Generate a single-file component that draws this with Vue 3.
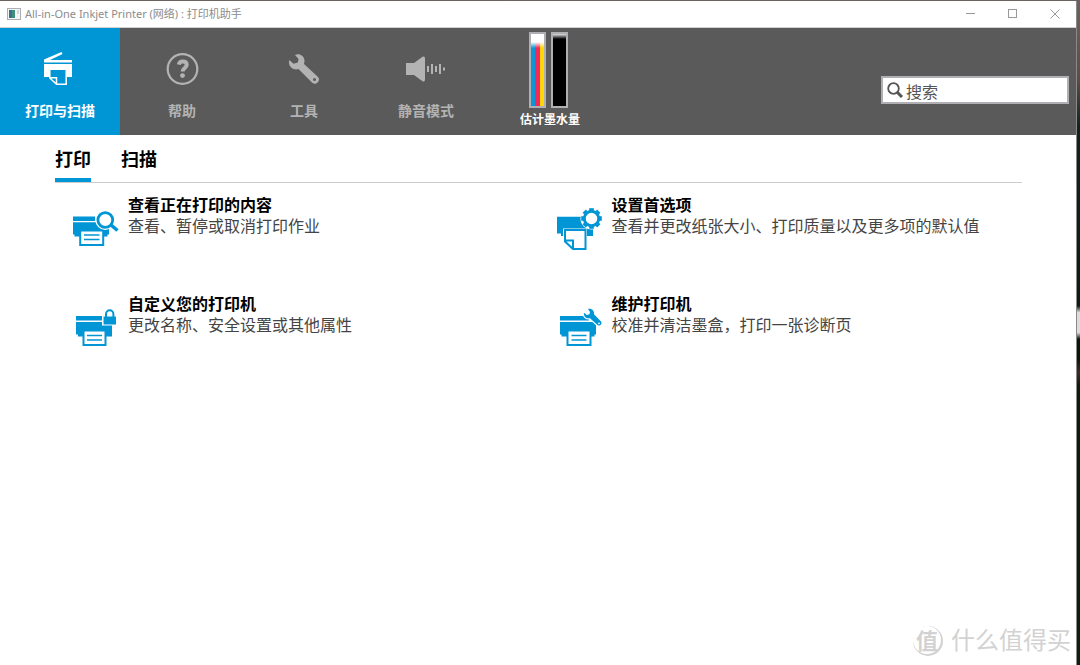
<script setup>
import { ref } from 'vue'

const section = ref('scan')
const tab = ref('print')
const query = ref('')

const sections = [
  { id: 'scan', label: '打印与扫描' },
  { id: 'help', label: '帮助' },
  { id: 'tools', label: '工具' },
  { id: 'quiet', label: '静音模式' }
]
const tabs = [
  { id: 'print', label: '打印' },
  { id: 'scan', label: '扫描' }
]
const tasks = [
  { id: 'queue', title: '查看正在打印的内容', text: '查看、暂停或取消打印作业' },
  { id: 'prefs', title: '设置首选项', text: '查看并更改纸张大小、打印质量以及更多项的默认值' },
  { id: 'custom', title: '自定义您的打印机', text: '更改名称、安全设置或其他属性' },
  { id: 'maintain', title: '维护打印机', text: '校准并清洁墨盒，打印一张诊断页' }
]
const teeth = [0, 45, 90, 135, 180, 225, 270, 315]
</script>

<template>
  <div class="desktop">
    <div class="window">
      <header class="titlebar">
        <svg class="app-icon" viewBox="0 0 14 12" aria-hidden="true">
          <rect x="0.5" y="0.5" width="13" height="11" fill="#f4f6f6" stroke="#a9b0b3" />
          <rect x="2" y="2" width="6" height="8" fill="#3f8f7c" />
          <rect x="2" y="2" width="3" height="8" fill="#3b6f8f" />
          <path d="M10 3h2M10 5h2" stroke="#b5b5b5" />
        </svg>
        <h1>All-in-One Inkjet Printer (网络) : 打印机助手</h1>
        <div class="controls">
          <button type="button" aria-label="最小化"><svg viewBox="0 0 10 10"><path d="M0 4.5h9" /></svg></button>
          <button type="button" aria-label="最大化"><svg viewBox="0 0 10 10"><rect x="0.5" y="0.5" width="8" height="8" /></svg></button>
          <button type="button" aria-label="关闭"><svg viewBox="0 0 10 10"><path d="M0.5 0.5l9 9M9.5 0.5l-9 9" /></svg></button>
        </div>
      </header>

      <div class="toolbar">
        <nav class="sections">
          <button
            v-for="s in sections"
            :key="s.id"
            type="button"
            class="section"
            :class="{ active: section === s.id }"
            @click="section = s.id"
          >
            <svg viewBox="0 0 40 40" aria-hidden="true">
              <g v-if="s.id === 'scan'">
                <path d="M4 10.500L21.500 3l1 2L10 11h22v2.500H4z" fill="#fff" />
                <path d="M4 15h28v13h-5v-7H10v7H4z" fill="#fff" />
                <path d="M10.500 21.500h15V35H16.500L10.500 29z" fill="#0096d6" />
                <path d="M26.200 20v15.200H16.500L9.800 29V20M10 28.800h6.500V35" fill="none" stroke="#fff" stroke-width="1.500" />
              </g>
              <g v-else-if="s.id === 'help'">
                <circle cx="20.500" cy="20" r="14.800" fill="none" stroke="#b3b3b3" stroke-width="2.200" />
                <path d="M16.800 15.600c.4-2.300 1.800-3.100 3.900-3.100 2.400 0 4 1.200 4 3.200 0 3.300-4 3.200-4 6.800" fill="none" stroke="#b3b3b3" stroke-width="4" />
                <circle cx="20.500" cy="26.600" r="2.400" fill="#b3b3b3" />
              </g>
              <g v-else-if="s.id === 'tools'">
                <path d="M11 6c4-2 9 .5 9.500 5.500 0 1.500-.3 2.500-.5 3.500L33.500 27.500a4 4 0 0 1-5.500 6L14.500 20c-4 1.500-9-1-9.500-6-.1-1.200 0-2 .3-3l4.200 3.800 4.300-1.300.8-3.500z" fill="#b3b3b3" />
                <circle cx="30.500" cy="30.500" r="1.500" fill="#5a5a5a" />
              </g>
              <g v-else>
                <path d="M0 14h8l8.500-6.200Q19 6.500 19 9.500v21Q19 33.500 16.500 32.200L8 26H0z" fill="#b3b3b3" />
                <path d="M22 17v6M26 15v10M30 17v6M34 15v10M38 18.500v3" fill="none" stroke="#b3b3b3" stroke-width="2" />
              </g>
            </svg>
            <span>{{ s.label }}</span>
          </button>
          <button type="button" class="ink">
            <span class="tanks">
              <span class="tank color"></span>
              <span class="tank black"></span>
            </span>
            <span>估计墨水量</span>
          </button>
        </nav>
        <label class="search">
          <svg viewBox="0 0 16 16" aria-hidden="true">
            <circle cx="6.500" cy="6.500" r="5.300" fill="none" stroke="#555" stroke-width="1.800" />
            <path d="M10 10l5 5" stroke="#555" stroke-width="3" />
          </svg>
          <input v-model="query" type="text" placeholder="搜索" aria-label="搜索" />
        </label>
      </div>

      <main>
        <div class="tabs">
          <button
            v-for="t in tabs"
            :key="t.id"
            type="button"
            :class="{ current: tab === t.id }"
            @click="tab = t.id"
          >{{ t.label }}</button>
        </div>
        <div class="tasks">
          <a v-for="t in tasks" :key="t.id" class="task" href="#">
            <svg viewBox="0 0 48 48" fill="#0096d6" aria-hidden="true">
              <g v-if="t.id === 'queue'">
                <path d="M1 12.500h22v4.500H1zM1 18.300h36V30.500h-1.500V32.500H2.500V30.500H1z" />
                <path d="M8.200 26.500h23V41h-23z" fill="#fff" stroke="#0096d6" stroke-width="2" />
                <path d="M12 31h15.500M12 35.500h15.500" stroke="#0096d6" stroke-width="1.700" />
                <circle cx="33.300" cy="16" r="10" fill="#fff" />
                <path d="M37 20l6 5" stroke="#fff" stroke-width="6" />
                <circle cx="33.300" cy="16" r="7.400" fill="#fff" stroke="#0096d6" stroke-width="2.800" />
                <path d="M38.500 20.500l7 6" stroke="#0096d6" stroke-width="3.600" />
              </g>
              <g v-else-if="t.id === 'prefs'">
                <path d="M1 12.700h36V32H5V29.500H1z" />
                <path d="M7 24.500h24v9H7z" fill="#fff" />
                <path d="M9 26h20.500V45H17L9 37.500zM9 36.500h8V45" fill="#fff" stroke="#0096d6" stroke-width="2" />
                <circle cx="35.500" cy="14.500" r="11" fill="#fff" />
                <rect v-for="a in teeth" :key="a" x="33.200" y="4.200" width="4.600" height="5" :transform="`rotate(${a} 35.500 14.500)`" />
                <circle cx="35.500" cy="14.500" r="7.200" fill="#fff" stroke="#0096d6" stroke-width="2.900" />
              </g>
              <g v-else-if="t.id === 'custom'">
                <path d="M4 13h26v4.500H4zM4 19h36v14.500H6V31.500H4z" />
                <path d="M11.500 27.500h22V42h-22z" fill="#fff" stroke="#0096d6" stroke-width="2" />
                <path d="M15 32.500h15M15 37h15" stroke="#0096d6" stroke-width="1.700" />
                <path d="M30 12.500H46V22.500H30z" fill="#fff" />
                <path d="M31.500 13.500H44V21.500H31.500z" />
                <path d="M34 14v-3a3.700 3.700 0 0 1 7.400 0v3" fill="none" stroke="#0096d6" stroke-width="2" />
              </g>
              <g v-else>
                <path d="M4 13h29v4.500H4zM4 19h36v12.500h-1.500v2H5.500v-2H4z" />
                <path d="M11.500 27.500h23V42h-23z" fill="#fff" stroke="#0096d6" stroke-width="2" />
                <path d="M15.500 32.500h15M15.500 37h15" stroke="#0096d6" stroke-width="1.700" />
                <path
                  d="M32 6c3-1 6.600 1.300 6 5.200L45 18.500c1.800 2-1.200 5.200-3.500 3.600L34 15.200c-3.500.8-6.600-1.500-6-5.400l2.800 2.200 2.700-.7.500-2.200z"
                  stroke="#fff" stroke-width="2.400" paint-order="stroke"
                />
                <circle cx="43" cy="20.300" r="0.900" fill="#fff" />
              </g>
            </svg>
            <span class="copy">
              <strong>{{ t.title }}</strong>
              <span>{{ t.text }}</span>
            </span>
          </a>
        </div>
      </main>
      <div class="watermark"><span class="seal">值</span><span>什么值得买</span></div>
    </div>
  </div>
</template>

<style>
body {
  margin: 0;
}
</style>

<style scoped>
.desktop {
  box-sizing: border-box;
  min-height: 100vh;
  display: flex;
  padding: 1px 3px 0 0;
  background: linear-gradient(#6b6360 0, #5b4c48 12%, #14211f 19%, #101a12 46%, #ddd 47%, #ddd 50%, #0c140c 51%, #0c140c 54%, #3a2c28 56%, #10180f 58%, #131a12 100%);
  font-family: "Noto Sans", "Noto Sans CJK SC", sans-serif;
}
.window {
  flex: 1;
  display: flex;
  flex-direction: column;
  position: relative;
  background: #fff;
  border-right: 1px solid #8a8a8a;
}
button {
  border: 0;
  padding: 0;
  background: none;
  font: inherit;
  color: inherit;
}
.titlebar {
  display: flex;
  align-items: center;
  box-sizing: border-box;
  height: 27px;
  padding-left: 7px;
  border-bottom: 1px solid #d0d0d0;
}
.app-icon {
  width: 14px;
  height: 12px;
  margin-right: 4px;
}
h1 {
  margin: 0;
  flex: 1;
  font-size: 11px;
  line-height: 16px;
  font-weight: 400;
  color: #8c8c8c;
}
.controls {
  display: flex;
}
.controls button {
  width: 42px;
  height: 26px;
  display: flex;
  align-items: center;
  justify-content: center;
}
.controls svg {
  width: 10px;
  height: 10px;
  fill: none;
  stroke: #999;
}
.toolbar {
  display: flex;
  justify-content: space-between;
  height: 107px;
  background: #5a5a5a;
}
.sections {
  display: flex;
  gap: 2px;
}
.section {
  width: 120px;
  display: flex;
  flex-direction: column;
  align-items: center;
  justify-content: flex-start;
  gap: 12px;
  padding-top: 21px;
  font-size: 14px;
  line-height: 20px;
  font-weight: 700;
  color: #b3b3b3;
}
.section svg {
  width: 40px;
  height: 40px;
}
.section.active {
  background: #0096d6;
  color: #fff;
}
.ink {
  width: 124px;
  display: flex;
  flex-direction: column;
  align-items: center;
  justify-content: flex-start;
  gap: 4px;
  padding-top: 4px;
  font-size: 12px;
  line-height: 16px;
  font-weight: 700;
  color: #fff;
}
.tanks {
  display: flex;
  gap: 5px;
  padding-right: 4px;
}
.tank {
  box-sizing: border-box;
  width: 17px;
  height: 76px;
  border: 2px solid #b0b0b4;
}
.color {
  background:
    linear-gradient(#fff 8px, transparent 14px),
    linear-gradient(90deg, #0c96d6 4px, #ee2a5e 4px, #ee2a5e 9px, #ffd60a 9px);
}
.black {
  background: linear-gradient(#e4e4e4, #000 5px);
}
.search {
  align-self: flex-start;
  box-sizing: border-box;
  display: flex;
  align-items: center;
  gap: 3px;
  width: 188px;
  height: 28px;
  margin: 48px 7px 0 0;
  padding-left: 4px;
  background: #fff;
  border: 2px solid #b0b0b4;
}
.search svg {
  flex: none;
  width: 16px;
  height: 16px;
}
.search input {
  flex: 1;
  min-width: 0;
  border: 0;
  padding: 2px 0 0;
  outline: 0;
  background: none;
  font: 16px/20px "Noto Sans CJK SC", sans-serif;
  color: #555;
}
.search input::placeholder {
  color: #555;
  opacity: 1;
}
main {
  flex: 1;
  padding: 0 54px 0 55px;
}
.tabs {
  display: flex;
  gap: 30px;
  border-bottom: 1px solid #ccc;
}
.tabs button {
  height: 47px;
  box-sizing: border-box;
  padding-top: 5px;
  border-bottom: 4px solid transparent;
  font-size: 18px;
  line-height: 38px;
  font-weight: 700;
  color: #000;
}
.tabs .current {
  border-bottom-color: #0096d6;
}
.tasks {
  display: grid;
  grid-template-columns: 1fr 1fr;
  row-gap: 42px;
  padding-top: 12px;
}
.task {
  display: flex;
  gap: 8px;
  padding-left: 17px;
  color: #444;
  text-decoration: none;
}
.task svg {
  flex: none;
  width: 48px;
  height: 48px;
  margin-top: 9px;
}
.copy {
  display: flex;
  flex-direction: column;
  font-size: 16px;
  line-height: 21px;
}
.copy strong {
  color: #000;
}
.watermark {
  position: absolute;
  right: 5px;
  bottom: 10px;
  display: flex;
  align-items: center;
  gap: 10px;
  font-size: 24px;
  line-height: 30px;
  color: #d2d2d2;
}
.seal {
  width: 28px;
  height: 28px;
  line-height: 28px;
  text-align: center;
  font-size: 22px;
  font-weight: 700;
  border-radius: 50%;
  box-shadow: 1px 1px 0 1px #d2d2d2;
}
</style>
